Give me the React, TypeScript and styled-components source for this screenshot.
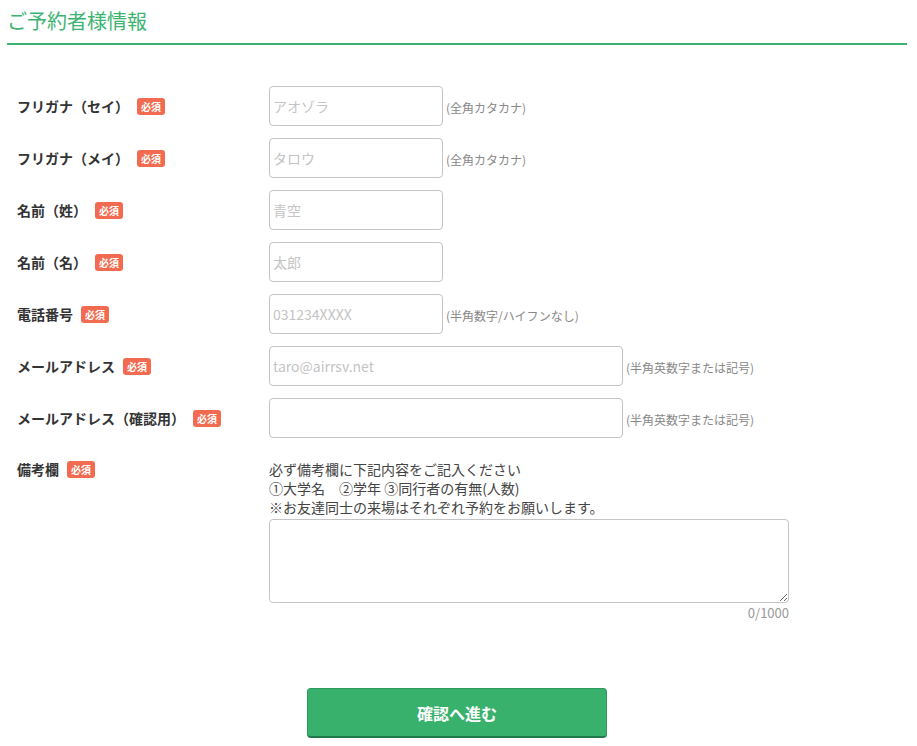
import React, { useState } from 'react';
import styled, { createGlobalStyle } from 'styled-components';

const GlobalStyle = createGlobalStyle`
    body {
        margin: 0;
        background: #fff;
        font-family: "Noto Sans CJK JP", "Noto Sans", "Liberation Sans", sans-serif;
        color: #333;
    }
`;

const Page = styled.div`
    width: 900px;
    padding: 0 0 0 7px;
`;

const Title = styled.h2`
    margin: 0;
    padding: 6px 0 7px;
    font-size: 20px;
    line-height: 30px;
    font-weight: 400;
    color: #3cb371;
    border-bottom: 2px solid #3cb371;
`;

const Form = styled.form`
    display: flex;
    flex-direction: column;
    gap: 12px;
    padding: 41px 0 0 10px;
`;

const Row = styled.div<{ $top?: boolean }>`
    display: grid;
    grid-template-columns: 252px 1fr;
    align-items: ${p => (p.$top ? 'start' : 'center')};
    margin-top: ${p => (p.$top ? '10px' : '0')};
`;

const Label = styled.div`
    display: flex;
    align-items: center;
    font-size: 14px;
    line-height: 19px;
    font-weight: 700;
    color: #333;
`;

const Badge = styled.span`
    display: inline-flex;
    align-items: center;
    justify-content: center;
    margin-left: 8px;
    width: 28px;
    height: 17px;
    border-radius: 3px;
    background: #f26a4f;
    color: #fff;
    font-size: 10px;
    font-weight: 700;
`;

const Field = styled.div`
    display: flex;
    align-items: center;
`;

const Input = styled.input<{ $wide?: boolean }>`
    box-sizing: border-box;
    width: ${p => (p.$wide ? '354px' : '174px')};
    height: 40px;
    padding: 0 3px;
    border: 1px solid #c4c4c4;
    border-radius: 4px;
    font-family: inherit;
    font-size: 14px;
    color: #333;
    outline: none;
    &::placeholder {
        color: #c4c4c4;
    }
`;

const Hint = styled.span`
    margin-left: 3px;
    padding-top: 2px;
    font-size: 12px;
    color: #888;
`;

const Notes = styled.div`
    display: flex;
    flex-direction: column;
    width: 520px;
`;

const NoteText = styled.p`
    margin: 0 0 2px;
    font-size: 14px;
    line-height: 19px;
    color: #444;
`;

const TextArea = styled.textarea`
    box-sizing: border-box;
    width: 520px;
    height: 84px;
    border: 1px solid #c4c4c4;
    border-radius: 4px;
    font-family: inherit;
    font-size: 14px;
    outline: none;
`;

const Counter = styled.div`
    text-align: right;
    font-size: 13px;
    line-height: 16px;
    margin-top: 2px;
    color: #999;
`;

const Actions = styled.div`
    display: flex;
    justify-content: center;
    padding-top: 55px;
    margin-left: -10px;
`;

const Submit = styled.button`
    width: 300px;
    height: 50px;
    border: 1px solid #2f9a5d;
    border-bottom: 2px solid #24794a;
    border-radius: 4px;
    background: #38b16d;
    color: #fff;
    font-family: inherit;
    font-size: 16px;
    font-weight: 700;
    cursor: pointer;
`;

type FieldDef = { label: string; placeholder: string; hint?: string; wide?: boolean };

const fields: FieldDef[] = [
    { label: 'フリガナ（セイ）', placeholder: 'アオゾラ', hint: '(全角カタカナ)' },
    { label: 'フリガナ（メイ）', placeholder: 'タロウ', hint: '(全角カタカナ)' },
    { label: '名前（姓）', placeholder: '青空' },
    { label: '名前（名）', placeholder: '太郎' },
    { label: '電話番号', placeholder: '031234XXXX', hint: '(半角数字/ハイフンなし)' },
    { label: 'メールアドレス', placeholder: 'taro@airrsv.net', hint: '(半角英数字または記号)', wide: true },
    { label: 'メールアドレス（確認用）', placeholder: '', hint: '(半角英数字または記号)', wide: true },
];

export default function App() {
    const [note, setNote] = useState('');

    return <Page>
        <GlobalStyle />
        <Title>ご予約者様情報</Title>
        <Form onSubmit={e => e.preventDefault()}>
            {fields.map(f => (
                <Row key={f.label}>
                    <Label>{f.label}<Badge>必須</Badge></Label>
                    <Field>
                        <Input $wide={f.wide} placeholder={f.placeholder} />
                        {f.hint && <Hint>{f.hint}</Hint>}
                    </Field>
                </Row>
            ))}
            <Row $top>
                <Label>備考欄<Badge>必須</Badge></Label>
                <Notes>
                    <NoteText>
                        必ず備考欄に下記内容をご記入ください<br />
                        ①大学名　②学年 ③同行者の有無(人数)<br />
                        ※お友達同士の来場はそれぞれ予約をお願いします。
                    </NoteText>
                    <TextArea value={note} maxLength={1000} onChange={e => setNote(e.target.value)} />
                    <Counter>{note.length}/1000</Counter>
                </Notes>
            </Row>
            <Actions>
                <Submit type="submit">確認へ進む</Submit>
            </Actions>
        </Form>
    </Page>
}
